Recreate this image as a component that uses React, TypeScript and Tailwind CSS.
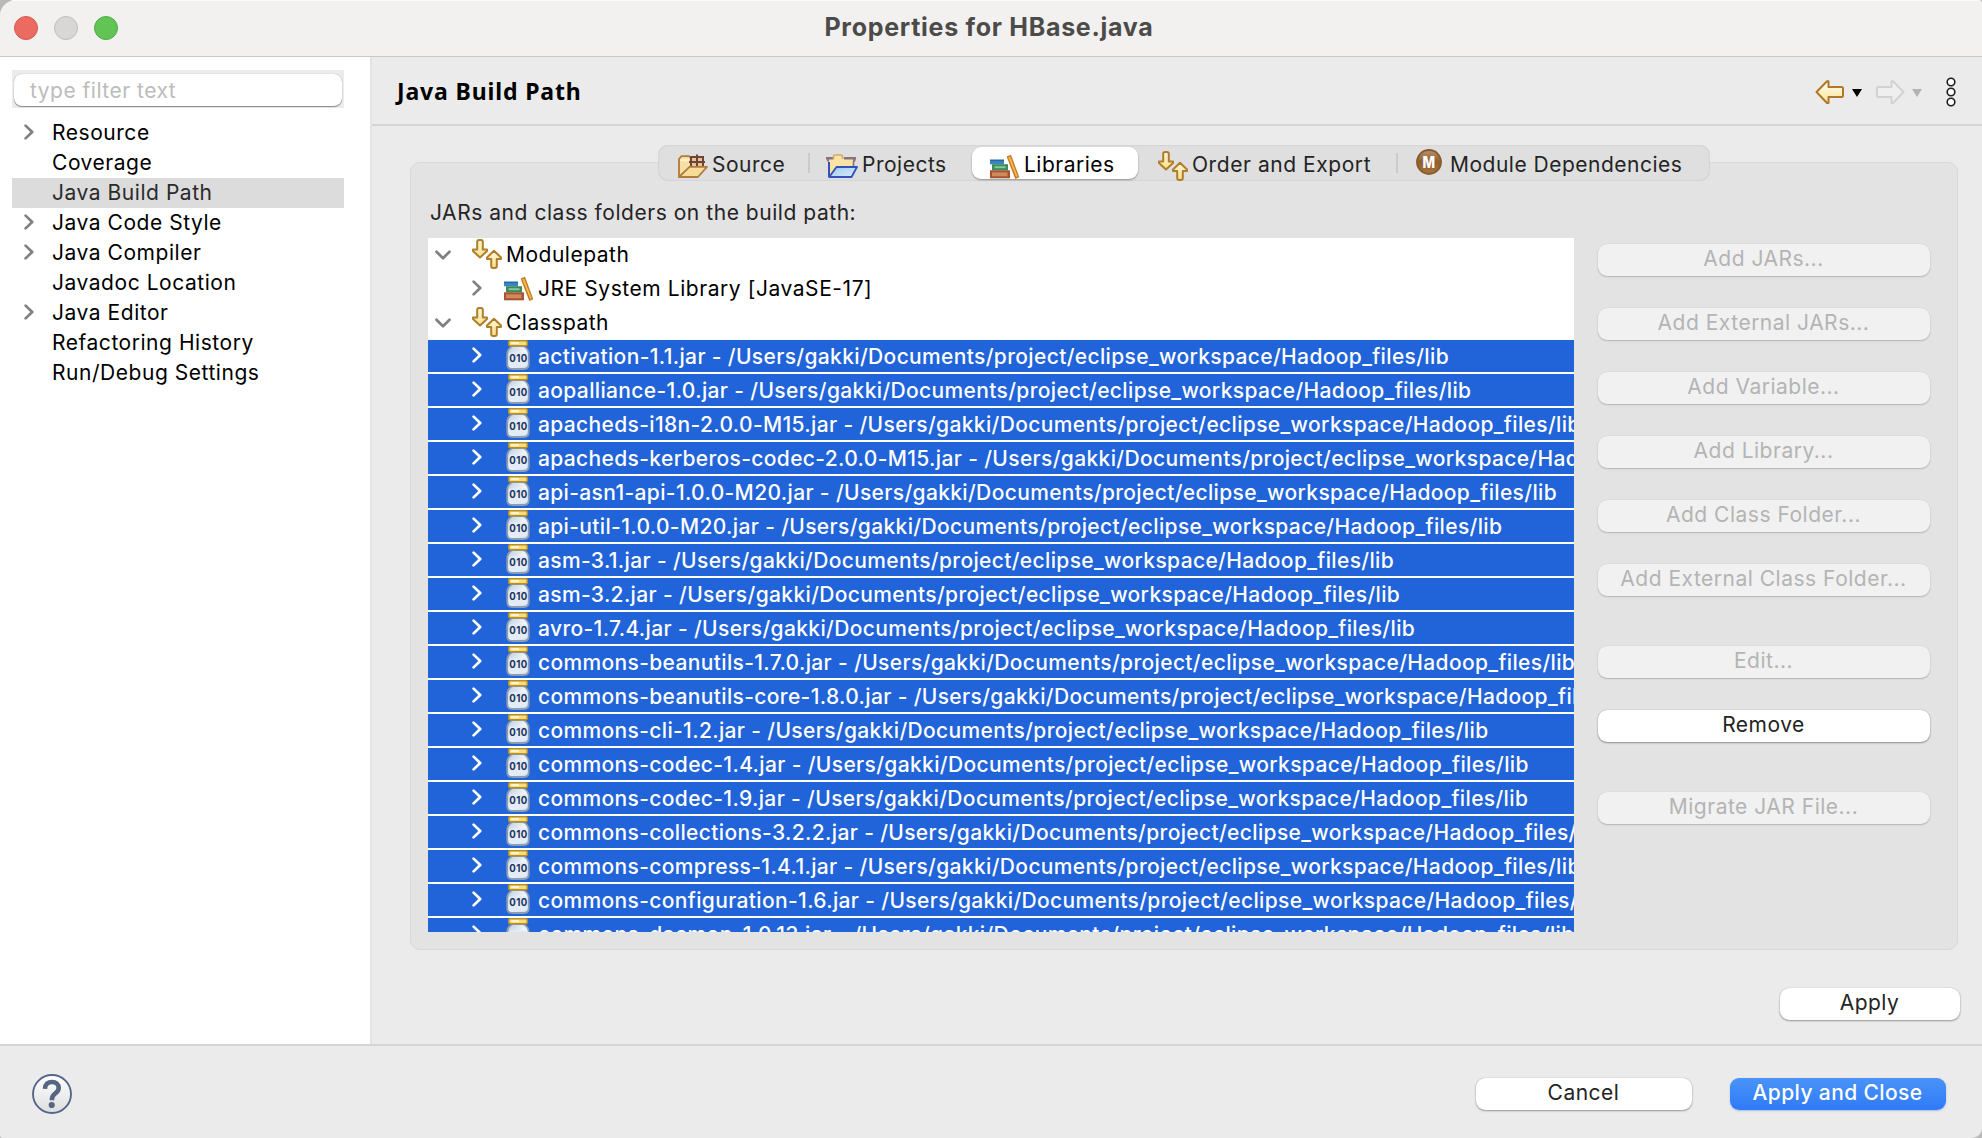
import React from "react";

const NAV = [
  { label: "Resource", expandable: true },
  { label: "Coverage" },
  { label: "Java Build Path", selected: true },
  { label: "Java Code Style", expandable: true },
  { label: "Java Compiler", expandable: true },
  { label: "Javadoc Location" },
  { label: "Java Editor", expandable: true },
  { label: "Refactoring History" },
  { label: "Run/Debug Settings" },
];

const LIB_DIR = "/Users/gakki/Documents/project/eclipse_workspace/Hadoop_files/lib";

const JARS = [
  "activation-1.1.jar",
  "aopalliance-1.0.jar",
  "apacheds-i18n-2.0.0-M15.jar",
  "apacheds-kerberos-codec-2.0.0-M15.jar",
  "api-asn1-api-1.0.0-M20.jar",
  "api-util-1.0.0-M20.jar",
  "asm-3.1.jar",
  "asm-3.2.jar",
  "avro-1.7.4.jar",
  "commons-beanutils-1.7.0.jar",
  "commons-beanutils-core-1.8.0.jar",
  "commons-cli-1.2.jar",
  "commons-codec-1.4.jar",
  "commons-codec-1.9.jar",
  "commons-collections-3.2.2.jar",
  "commons-compress-1.4.1.jar",
  "commons-configuration-1.6.jar",
  "commons-daemon-1.0.13.jar",
];

function ChevronRight({ className }: { className: string }) {
  return (
    <svg width="10" height="16" viewBox="0 0 10 16" fill="none" className={`shrink-0 ${className}`}>
      <path d="M1.6 1.6 8.2 8 1.6 14.4" stroke="currentColor" strokeWidth="2.7" strokeLinecap="round" strokeLinejoin="round" />
    </svg>
  );
}

function ChevronDown({ className }: { className: string }) {
  return (
    <svg width="16" height="10" viewBox="0 0 16 10" fill="none" className={`shrink-0 ${className}`}>
      <path d="M1.5 1.7 8 8.2 14.5 1.7" stroke="currentColor" strokeWidth="2.7" strokeLinecap="round" strokeLinejoin="round" />
    </svg>
  );
}

function PathIcon() {
  return (
    <svg width="30" height="30" viewBox="0 0 30 30" className="shrink-0">
      <defs>
        <linearGradient id="pathGold" x1="0" y1="0" x2="0" y2="1">
          <stop offset="0" stopColor="#fdf6d8" />
          <stop offset="1" stopColor="#fbe08a" />
        </linearGradient>
      </defs>
      <g fill="url(#pathGold)" stroke="#ae7f2a" strokeWidth="2" strokeLinejoin="round">
        <path d="M5.2 3q0-2 2-2h1.6q2 0 2 2v7.500h4.200v1.500L8 18.500 1 12v-1.500h4.200z" />
        <path d="M22 11.800 29 18.500V20h-4.200v7q0 2-2 2h-1.600q-2 0-2-2v-7H15v-1.500z" />
      </g>
    </svg>
  );
}

function BooksIcon() {
  return (
    <svg width="30" height="30" viewBox="0 0 30 30" className="shrink-0">
      <rect x="0" y="8.700" width="14" height="4.600" fill="#3a86c0" />
      <rect x="0" y="8.700" width="14" height="1.400" fill="#2468a4" />
      <rect x="2" y="13.200" width="16" height="6.200" fill="#3d8a5c" />
      <rect x="4.500" y="15.200" width="11" height="2" fill="#86c79b" />
      <rect x="0" y="19.300" width="20" height="8" fill="#a5532f" />
      <rect x="2" y="21.300" width="15.500" height="4" fill="#cd8a5c" />
      <path d="M16.600 5.500 21 3.700 29.300 26.300 25.300 28z" fill="#c97826" />
      <path d="M18.300 6.200 20 5.500 27.600 25.300 26.300 25.900z" fill="#f2c04c" />
    </svg>
  );
}

function JarIcon() {
  return (
    <svg width="24" height="32" viewBox="0 0 24 32" className="shrink-0">
      <defs>
        <linearGradient id="jarGlass" x1="0" y1="0" x2="1" y2="1">
          <stop offset="0" stopColor="#b9cce2" />
          <stop offset="0.5" stopColor="#f0f5fa" />
          <stop offset="1" stopColor="#c9d6e6" />
        </linearGradient>
      </defs>
      <path d="M6.500 6h11Q22.800 9 22.800 14.500V24q0 5-5 5H6.200q-5 0-5-5v-9.500Q1.200 9 6.500 6z" fill="url(#jarGlass)" stroke="#8b9db5" strokeWidth="1.800" />
      <rect x="2.800" y="12.500" width="18.400" height="14" rx="3" fill="#e3ebf7" />
      <rect x="2.700" y="0.800" width="18.600" height="4.900" rx="1.500" fill="#f5dc7c" stroke="#b98f2b" strokeWidth="1.600" />
      <path d="M5 3h8" stroke="#fffbe0" strokeWidth="1.600" />
      <text x="12.500" y="22.200" fontFamily="Inter, sans-serif" fontWeight="700" fontSize="11" fill="#1c3358" textAnchor="middle" textLength="18.500" lengthAdjust="spacingAndGlyphs">010</text>
    </svg>
  );
}

function SourceIcon() {
  return (
    <svg width="30" height="24" viewBox="0 0 30 24" className="shrink-0">
      <path d="M1 23V5l2.500-2.800H11l2 2h12V13" fill="#f7dfa4" stroke="#b07b3c" strokeWidth="1.800" strokeLinejoin="round" />
      <path d="M2.500 6.200H11" stroke="#fff3cf" strokeWidth="2" />
      <rect x="13" y="3" width="12" height="9" fill="#e6c596" />
      <path d="M13 2v11M19 .500v12M25 2v11M12 3h14M11 8h16" stroke="#6d4437" strokeWidth="2" fill="none" />
      <path d="M1 23 11.500 12.800H29L20 23z" fill="#f8dd9a" stroke="#b07b3c" strokeWidth="1.800" strokeLinejoin="round" />
    </svg>
  );
}

function ProjectsIcon() {
  return (
    <svg width="32" height="24" viewBox="0 0 32 24" className="shrink-0">
      <defs>
        <linearGradient id="projectBlue" x1="0" y1="0" x2="1" y2="1">
          <stop offset="0" stopColor="#9cc9f4" />
          <stop offset="1" stopColor="#d8efff" />
        </linearGradient>
      </defs>
      <rect x="3" y="5" width="24.500" height="16" fill="#f9e3a6" />
      <path d="M0 4.200h7.500M18 4.200h12M1 6.200h2M27 6.200h2.500" stroke="#8b737d" strokeWidth="2.600" />
      <path d="M7.500 5V2.500q0-1.500 1.500-1.500h6q1.500 0 1.500 1.500V5" fill="#f9e3a6" stroke="#d4aa62" strokeWidth="1.600" />
      <path d="M27.500 7v6" stroke="#8b737d" strokeWidth="1.600" />
      <path d="M3 23V8" stroke="#3b4cb4" strokeWidth="2" />
      <path d="M3.200 23 10.500 13H31l-5.500 10z" fill="url(#projectBlue)" stroke="#3450ba" strokeWidth="1.800" strokeLinejoin="round" />
    </svg>
  );
}

function ModuleIcon() {
  return (
    <svg width="26" height="26" viewBox="0 0 26 26" className="shrink-0">
      <defs>
        <linearGradient id="moduleBrown" x1="0" y1="0" x2="0" y2="1">
          <stop offset="0" stopColor="#b59370" />
          <stop offset="0.500" stopColor="#8f5f2e" />
          <stop offset="1" stopColor="#a5763f" />
        </linearGradient>
      </defs>
      <circle cx="13" cy="13" r="12" fill="url(#moduleBrown)" stroke="#8a5a2a" strokeWidth="1.800" />
      <text x="13" y="18.800" fontFamily="Inter, sans-serif" fontWeight="800" fontSize="16" fill="#fff" textAnchor="middle" textLength="13" lengthAdjust="spacingAndGlyphs">M</text>
    </svg>
  );
}

function HistoryArrow({ forward }: { forward?: boolean }) {
  return (
    <svg width="30" height="24" viewBox="0 0 30 24" className={forward ? "shrink-0 -scale-x-100" : "shrink-0"}>
      <defs>
        <linearGradient id="arrowGold" x1="0" y1="0" x2="0" y2="1">
          <stop offset="0" stopColor="#fffdf2" />
          <stop offset="1" stopColor="#fbe596" />
        </linearGradient>
      </defs>
      <path
        d="M1.500 12 12 1.200h1.500V7H26.500q1.500 0 1.500 1.500v7q0 1.500-1.500 1.500H13.500v6H12z"
        fill={forward ? "#efefef" : "url(#arrowGold)"}
        stroke={forward ? "#d2d2d2" : "#b1772a"}
        strokeWidth="2"
        strokeLinejoin="round"
      />
    </svg>
  );
}

function Triangle({ className }: { className: string }) {
  return (
    <svg width="10" height="8" viewBox="0 0 10 8" className={`shrink-0 ${className}`}>
      <path d="M0 0h10L5 8z" fill="currentColor" />
    </svg>
  );
}

function PushButton({ label, enabled, className = "" }: { label: string; enabled?: boolean; className?: string }) {
  return (
    <button
      className={`flex h-8 shrink-0 items-center justify-center rounded-[9px] pr-px pb-[3px] leading-none whitespace-nowrap ${
        enabled
          ? "bg-white text-[#242424] shadow-[0_0_1px_rgba(0,0,0,0.3),0_1px_2px_rgba(0,0,0,0.35)]"
          : "bg-[#f1f1f1] text-[#b4b4b4] shadow-[0_0_1px_rgba(0,0,0,0.16),0_1px_1.5px_rgba(0,0,0,0.2)]"
      } ${className}`}
    >
      {label}
    </button>
  );
}

export default function App() {
  return (
    <div className="h-[1138px] w-[1982px] overflow-hidden bg-[#b9b9b9] font-['Inter',sans-serif] text-[21px] tracking-[0.5px] text-black">
      <div className="flex h-full flex-col overflow-hidden rounded-tl-[16px] rounded-tr-[4px] rounded-br-[10px] rounded-bl-[3px] bg-[#ebebeb]">
        <header className="relative flex h-[57px] shrink-0 items-center gap-4 border-t border-b border-t-[#fafafa] border-b-[#c9c9c8] bg-[#f2f1ef] pb-px pl-[14px]">
          <span className="size-6 rounded-full border border-[#d65a4f] bg-[#ec6b60]" />
          <span className="size-6 rounded-full border border-[#bfbebc] bg-[#d8d7d5]" />
          <span className="size-6 rounded-full border border-[#51ad44] bg-[#61c454]" />
          <h1 className="absolute inset-x-0 top-[10px] pr-1 text-center text-[25px] leading-[32px] font-bold tracking-[0.72px] text-[#4b4b4a]">
            Properties for HBase.java
          </h1>
        </header>

        <div className="flex min-h-0 flex-1">
          <aside className="w-[372px] shrink-0 border-r-2 border-[#e3e3e3] bg-white pt-[13px] pl-3">
            <div className="h-[38px] w-[332px] bg-[#ececec] px-0.5 pt-1">
              <div className="h-8 rounded-[8px] bg-white pl-4 leading-[33px] text-[#bcbcbc] shadow-[0_0_1px_rgba(0,0,0,0.35),0_1px_1px_rgba(0,0,0,0.4)]">
                type filter text
              </div>
            </div>
            <nav className="mt-[10px] w-[332px]">
              {NAV.map((n) => (
                <div key={n.label} className={`flex h-[30px] items-center pl-3 ${n.selected ? "bg-[#dcdcdc] text-[#2a2a2a]" : ""}`}>
                  <div className="w-7 pb-[3px]">{n.expandable && <ChevronRight className="text-[#808080]" />}</div>
                  <span className="leading-[30px] tracking-[0.54px]">{n.label}</span>
                </div>
              ))}
            </nav>
          </aside>

          <main className="flex min-w-0 flex-1 flex-col">
            <div className="flex h-[69px] shrink-0 items-center border-b-2 border-[#d5d5d5] pr-[26px] pl-[25px]">
              <h2 className="flex-1 font-['Noto_Sans',sans-serif] text-[23px] leading-8 font-bold tracking-[0.86px]">Java Build Path</h2>
              <div className="flex items-center pt-0.5">
                <HistoryArrow />
                <Triangle className="ml-[7px] mt-0.5 text-black" />
                <span className="ml-[13px] flex"><HistoryArrow forward /></span>
                <Triangle className="ml-[7px] mt-0.5 text-[#b3b3b3]" />
                <svg width="10" height="30" viewBox="0 0 10 30" className="ml-6">
                  <g fill="#fff" stroke="#1c1c1c" strokeWidth="1.600">
                    <circle cx="5" cy="5" r="3.800" />
                    <circle cx="5" cy="15" r="3.800" />
                    <circle cx="5" cy="25" r="3.800" />
                  </g>
                </svg>
              </div>
            </div>

            <div className="mt-[19px] mr-6 ml-[38px] flex flex-col">
              <div className="z-10 mx-auto flex h-9 w-[1052px] items-center rounded-[10px] bg-[#dfdfdf] text-[#242424] shadow-[inset_0_0_2px_rgba(0,0,0,0.16)]">
                <div className="flex h-9 w-[150px] items-center gap-1 pt-0.5 pl-5">
                  <span className="pt-1"><SourceIcon /></span>
                  <span className="pt-0.5">Source</span>
                </div>
                <div className="h-5 w-0.5 bg-[#cbcbcb]" />
                <div className="flex h-9 w-[162px] items-center gap-1 pt-0.5 pl-4">
                  <span className="pt-1"><ProjectsIcon /></span>
                  <span className="pt-0.5">Projects</span>
                </div>
                <div className="flex h-8 w-[166px] items-center gap-1 rounded-[9px] bg-white pt-0.5 pl-[18px] text-black shadow-[0_1px_2px_rgba(0,0,0,0.35)]">
                  <span className="pt-1"><BooksIcon /></span>
                  <span className="pt-0.5">Libraries</span>
                </div>
                <div className="flex h-9 w-[258px] items-center gap-1 pt-0.5 pl-5">
                  <span className="pt-1"><PathIcon /></span>
                  <span className="pt-0.5 tracking-[0.56px]">Order and Export</span>
                </div>
                <div className="h-5 w-0.5 bg-[#cbcbcb]" />
                <div className="flex flex-1 items-center gap-2 pt-0.5 pl-[18px]">
                  <span className="pb-1"><ModuleIcon /></span>
                  <span className="pt-0.5">Module Dependencies</span>
                </div>
              </div>

              <section className="-mt-[19px] flex h-[788px] flex-col rounded-[10px] border border-[#d9d9d9] bg-[#e3e3e3] pl-[17px]">
                <p className="mt-[34px] h-[41px] pl-0.5 leading-[31px] tracking-[0.54px] text-[#242424]">JARs and class folders on the build path:</p>
                <div className="flex">
                  <div className="h-[694px] w-[1146px] shrink-0 overflow-hidden bg-white">
                    <div className="flex h-[34px] items-center pl-[7px]">
                      <ChevronDown className="text-[#808080]" />
                      <span className="mr-1 ml-[21px] pb-0.5"><PathIcon /></span>
                      <span>Modulepath</span>
                    </div>
                    <div className="flex h-[34px] items-center pl-11">
                      <ChevronRight className="mb-[3px] text-[#808080]" />
                      <span className="mr-1 ml-[22px] pb-0.5"><BooksIcon /></span>
                      <span className="tracking-[0.56px]">JRE System Library [JavaSE-17]</span>
                    </div>
                    <div className="flex h-[34px] items-center pl-[7px]">
                      <ChevronDown className="text-[#808080]" />
                      <span className="mr-1 ml-[21px] pb-0.5"><PathIcon /></span>
                      <span>Classpath</span>
                    </div>
                    {JARS.map((jar) => (
                      <div key={jar} className="flex h-[34px] border-b-2 border-white bg-[#2163d9] pl-11 text-white">
                        <ChevronRight className="mt-[7px]" />
                        <span className="mr-2 ml-6"><JarIcon /></span>
                        <span className="leading-[33px] font-medium tracking-[0.355px] whitespace-nowrap">
                          {jar} - {LIB_DIR}
                        </span>
                      </div>
                    ))}
                  </div>
                  <div className="ml-6 flex w-[332px] flex-col gap-8 pt-1.5">
                    <PushButton label="Add JARs..." />
                    <PushButton label="Add External JARs..." />
                    <PushButton label="Add Variable..." />
                    <PushButton label="Add Library..." />
                    <PushButton label="Add Class Folder..." />
                    <PushButton label="Add External Class Folder..." />
                    <PushButton label="Edit..." className="mt-[18px]" />
                    <PushButton label="Remove" enabled />
                    <PushButton label="Migrate JAR File..." className="mt-[18px]" />
                  </div>
                </div>
              </section>
            </div>

            <div className="mt-[38px] flex justify-end pr-[22px]">
              <PushButton label="Apply" enabled className="w-[180px]" />
            </div>
          </main>
        </div>

        <footer className="flex h-[94px] shrink-0 items-center justify-between border-t-2 border-[#d5d5d5] pr-9 pl-8">
          <svg width="40" height="40" viewBox="0 0 40 40" className="mt-1">
            <defs>
              <linearGradient id="helpFill" x1="0" y1="0" x2="0" y2="1">
                <stop offset="0" stopColor="#ffffff" />
                <stop offset="1" stopColor="#dedede" />
              </linearGradient>
            </defs>
            <circle cx="20" cy="20" r="19" fill="url(#helpFill)" stroke="#56658a" strokeWidth="1.900" />
            <path d="M12.900 14.800C13.100 10.200 16 8 20 8s6.700 2.400 6.700 5.900c0 5.600-6.700 5.200-6.700 11.100v1.200" fill="none" stroke="#566583" strokeWidth="4.600" />
            <circle cx="19.700" cy="31" r="3.100" fill="#566583" />
          </svg>
          <div className="mt-1 flex gap-[38px]">
            <PushButton label="Cancel" enabled className="w-[216px]" />
            <button className="flex h-8 w-[216px] items-center justify-center rounded-[9px] bg-linear-to-b from-[#4a93f8] to-[#2f7af6] pr-px pb-[3px] leading-none font-medium tracking-[0.38px] text-white shadow-[0_1px_2px_rgba(30,90,220,0.3)]">
              Apply and Close
            </button>
          </div>
        </footer>
      </div>
    </div>
  );
}
